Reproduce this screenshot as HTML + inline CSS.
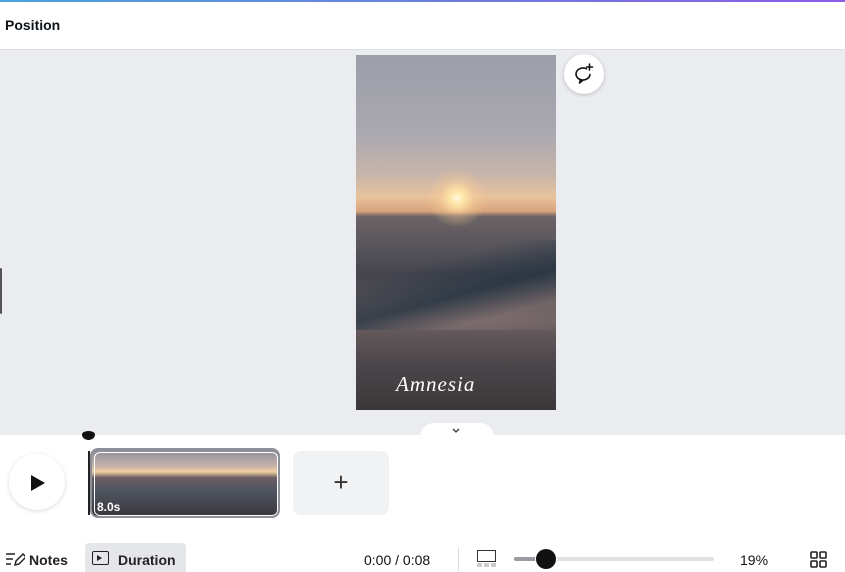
<!DOCTYPE html>
<html><head><style>
body{margin:0;width:845px;height:572px;overflow:hidden;background:#fff;font-family:"Liberation Sans",sans-serif;position:relative}
.a{position:absolute}
</style></head><body>
<div class="a" style="left:0;top:0;width:845px;height:2px;background:linear-gradient(90deg,#4aa3d8,#8b5ce6)"></div>
<div class="a" style="left:5px;top:17px;font-size:14px;font-weight:bold;color:#0e1318">Position</div>
<div class="a" style="left:0;top:49px;width:845px;height:385px;background:#ebecf0;border-top:1px solid #dcdde2"></div>
<div class="a" style="left:0;top:268px;width:2px;height:46px;background:#555;border-radius:2px"></div>
<div class="a" style="left:356px;top:55px;width:200px;height:355px;overflow:hidden;background:linear-gradient(180deg,#9c9ea9 0%,#aaa8b0 22%,#c9b5aa 34%,#e8c29c 40%,#d8a47c 44%,#6c6466 45.5%,#5c585e 52%,#45454e 62%,#6a5e60 75%,#4a4549 88%,#3a3739 100%)">
<div class="a" style="left:71px;top:113px;width:60px;height:60px;border-radius:50%;background:radial-gradient(circle,#fff8e0 0%,#ffe6a8 15%,rgba(255,210,150,.4) 40%,rgba(255,200,150,0) 70%)"></div>
<div class="a" style="left:-20px;top:185px;width:260px;height:90px;background:linear-gradient(165deg,rgba(0,0,0,0) 30%,rgba(25,45,60,.6) 55%,rgba(200,170,160,.2) 75%,rgba(0,0,0,0) 100%)"></div>
<div class="a" style="left:40px;top:317px;font-family:'Liberation Serif',serif;font-style:italic;font-size:21px;color:#fff;letter-spacing:1px">Amnesia</div>
</div>
<div class="a" style="left:564px;top:54px;width:40px;height:40px;border-radius:50%;background:#fff;box-shadow:0 1px 4px rgba(0,0,0,.2)">
<svg width="40" height="40" viewBox="0 0 40 40"><path d="M22.5 14.8A7 6 0 1 0 26 20.5" fill="none" stroke="#111" stroke-width="1.6" stroke-linecap="round"/><path d="M16.5 25.6L15.5 29l3.2-2.6" fill="none" stroke="#111" stroke-width="1.6" stroke-linecap="round" stroke-linejoin="round"/><path d="M25.5 10v6M22.5 13h6" stroke="#111" stroke-width="1.6" stroke-linecap="round"/></svg></div>
<div class="a" style="left:420px;top:423px;width:74px;height:14px;background:#fff;border-radius:14px 14px 0 0"></div>
<svg class="a" style="left:452px;top:428px" width="8" height="6"><path d="M1 1l3 3 3-3" fill="none" stroke="#333" stroke-width="1.3"/></svg>
<div class="a" style="left:82px;top:431px;width:13px;height:9px;background:#111;border-radius:50% 50% 50% 50%/40% 40% 60% 60%"></div>
<div class="a" style="left:88px;top:451px;width:2px;height:64px;background:#222"></div>
<div class="a" style="left:9px;top:454px;width:56px;height:56px;border-radius:50%;background:#fff;box-shadow:0 1px 5px rgba(0,0,0,.15)"></div>
<svg class="a" style="left:30px;top:475px" width="16" height="16"><path d="M1 0L15 8L1 16Z" fill="#111"/></svg>
<div class="a" style="left:90px;top:448px;width:186px;height:66px;border:2px solid #8d9096;border-radius:8px;overflow:hidden;background:linear-gradient(180deg,#8c8e9c 0%,#c8b2a8 25%,#f0d0a0 33%,#6a5e62 42%,#4f5560 62%,#3a363c 100%)">
<div class="a" style="left:2px;top:2px;width:182px;height:62px;border-radius:6px;border:1px solid #fff"></div>
<div class="a" style="left:5px;top:50px;color:#fff;font-weight:bold;font-size:12px">8.0s</div>
</div>
<div class="a" style="left:293px;top:451px;width:96px;height:64px;background:#f1f2f4;border-radius:8px;text-align:center;line-height:62px;font-size:26px;color:#333;font-weight:300">+</div>
<svg class="a" style="left:5px;top:551px" width="20" height="16"><path d="M1 3h9M1 8h7M1 13h5" stroke="#222" stroke-width="1.5"/><path d="M10 14l1-4 7-7 3 3-7 7z" fill="none" stroke="#222" stroke-width="1.5"/></svg>
<div class="a" style="left:29px;top:552px;font-size:14px;font-weight:bold;color:#222">Notes</div>
<div class="a" style="left:85px;top:543px;width:101px;height:29px;background:#e5e6ea;border-radius:4px 4px 0 0"></div>
<div class="a" style="left:92px;top:551px;width:15px;height:12px;border:1.5px solid #222;border-radius:2px"></div>
<svg class="a" style="left:97px;top:555px" width="6" height="6"><path d="M0 0L5 3L0 6Z" fill="#222"/></svg>
<div class="a" style="left:118px;top:552px;font-size:14px;font-weight:bold;color:#222">Duration</div>
<div class="a" style="left:364px;top:552px;font-size:14px;color:#111">0:00 / 0:08</div>
<div class="a" style="left:458px;top:547px;width:1px;height:24px;background:#ddd"></div>
<div class="a" style="left:477px;top:550px;width:17px;height:10px;border:1.3px solid #333"></div>
<div class="a" style="left:477px;top:563px;width:19px;height:4px;background:repeating-linear-gradient(90deg,#ccc 0 5px,#fff 5px 7px)"></div>
<div class="a" style="left:514px;top:557px;width:200px;height:4px;background:#e1e2e6;border-radius:2px"></div>
<div class="a" style="left:514px;top:557px;width:30px;height:4px;background:#9a9ca2;border-radius:2px"></div>
<div class="a" style="left:536px;top:549px;width:20px;height:20px;border-radius:50%;background:#111;box-shadow:0 0 0 1px #fff"></div>
<div class="a" style="left:740px;top:552px;font-size:14px;color:#111">19%</div>
<svg class="a" style="left:810px;top:551px" width="18" height="18"><g fill="none" stroke="#222" stroke-width="1.6"><rect x="1" y="1" width="6" height="6" rx="1"/><rect x="10" y="1" width="6" height="6" rx="1"/><rect x="1" y="10" width="6" height="6" rx="1"/><rect x="10" y="10" width="6" height="6" rx="1"/></g></svg>
</body></html>
